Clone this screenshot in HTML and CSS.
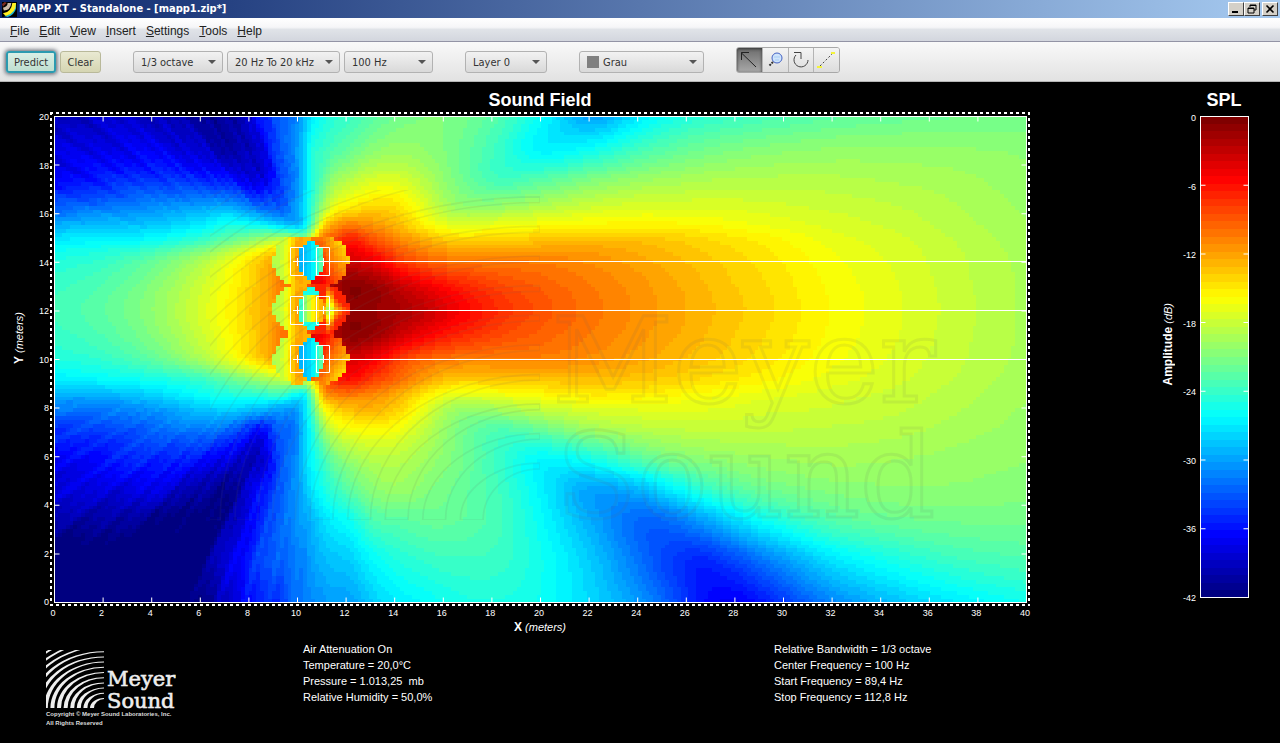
FILE: index.html
```html
<!DOCTYPE html>
<html lang="en">
<head>
  <meta charset="UTF-8" />
  <meta name="viewport" content="width=device-width, initial-scale=1.0" />
  <title>MAPP XT - Standalone - [mapp1.zip*]</title>
  <link rel="stylesheet" href="styles.css">
</head>
<body>
  <header class="titlebar">
    <svg class="app-icon" viewBox="0 0 16 16" aria-hidden="true">
      <rect width="16" height="16" fill="#000" />
      <path d="M2 15 Q13 13 14 1 L15 2 V7 Q13 14 6 16 Z" fill="#19b8d8" />
      <path d="M1 12 Q10 11 11 1 H15 Q15 12 4 15 Z" fill="#ffef20" />
      <path d="M1 6 Q6 5 6 1 L10 1 Q9 9 2 9 Z" fill="#c9b8a8" />
      <path d="M0 2 L3 0 L5 1 L1 5 Z" fill="#7b2a22" />
    </svg>
    <h1 class="title">MAPP XT - Standalone - [mapp1.zip*]</h1>
    <div class="window-buttons">
      <button class="window-button" aria-label="Minimize">
        <svg viewBox="0 0 12 10"><path d="M2 8h6" stroke="#000" stroke-width="2" /></svg>
      </button>
      <button class="window-button" aria-label="Restore">
        <svg viewBox="0 0 12 10"><path d="M4 3V1h6v5H8M4 1.5h6M2 4h6v5H2zM2 4.5h6" fill="none" stroke="#000" /></svg>
      </button>
      <button class="window-button close" aria-label="Close">
        <svg viewBox="0 0 12 10"><path d="M2.5 1.5l7 7M9.5 1.5l-7 7" stroke="#000" stroke-width="1.6" /></svg>
      </button>
    </div>
  </header>

  <nav class="menubar">
    <a href="#"><u>F</u>ile</a>
    <a href="#"><u>E</u>dit</a>
    <a href="#"><u>V</u>iew</a>
    <a href="#"><u>I</u>nsert</a>
    <a href="#"><u>S</u>ettings</a>
    <a href="#"><u>T</u>ools</a>
    <a href="#"><u>H</u>elp</a>
  </nav>

  <div class="toolbar">
    <button class="btn btn-predict">Predict</button>
    <button class="btn btn-clear">Clear</button>
    <div class="combo combo-bandwidth">
      <select aria-label="Bandwidth"><option>1/3 octave</option></select>
    </div>
    <div class="combo combo-range">
      <select aria-label="Frequency range"><option>20 Hz To 20 kHz</option></select>
    </div>
    <div class="combo combo-frequency">
      <select aria-label="Center frequency"><option>100 Hz</option></select>
    </div>
    <div class="combo combo-layer">
      <select aria-label="Layer"><option>Layer 0</option></select>
    </div>
    <div class="combo combo-color">
      <select aria-label="Color"><option>Grau</option></select>
    </div>
    <div class="tools">
      <button class="tool active" aria-label="Select">
        <svg viewBox="0 0 24 24"><path d="M19 19L4 4.500M4.500 12V4.500H12" fill="none" stroke="#222" /></svg>
      </button>
      <button class="tool" aria-label="Zoom">
        <svg viewBox="0 0 24 24">
          <path d="M10 14l-4 4" stroke="#333" stroke-width="2" stroke-dasharray="2 1" />
          <circle cx="14" cy="10" r="5" fill="#cfe4fb" stroke="#4563c4" />
          <path d="M11 9h6M12 12h4" stroke="#a6cdf5" />
        </svg>
      </button>
      <button class="tool" aria-label="Rotate">
        <svg viewBox="0 0 24 24"><path d="M19 12a7 7 0 1 1-12-5M5 4.500h7V11" fill="none" stroke="#444" /></svg>
      </button>
      <button class="tool" aria-label="Line">
        <svg viewBox="0 0 24 24">
          <path d="M6 18L18 6" stroke="#444" stroke-dasharray="2 2" />
          <path d="M3 19h5M17 5h4" stroke="#f4f43a" stroke-width="2" />
        </svg>
      </button>
    </div>
  </div>

  <main class="stage">
    <h2 class="plot-title">Sound Field</h2>
    <h2 class="scale-title">SPL</h2>

    <div class="y-axis">
      <p class="axis-title vertical"><b>Y</b> <i>(meters)</i></p>
      <ol class="y-labels">
        <li>20</li><li>18</li><li>16</li><li>14</li><li>12</li><li>10</li>
        <li>8</li><li>6</li><li>4</li><li>2</li><li>0</li>
      </ol>
    </div>

    <div class="plot">
      <div class="field">
        <canvas id="field" class="field-canvas" width="250" height="125"></canvas>
        <svg class="overlay" viewBox="0 0 973 487" preserveAspectRatio="none">
          <!-- watermark -->
          <g class="watermark">
            <svg x="156" y="74" width="330" height="330" viewBox="0 0 58 58">
              <path class="rings" d="" />
            </svg>
            <text x="498" y="286">Meyer</text>
            <text x="502" y="401">Sound</text>
          </g>
          <!-- frame and ticks -->
          <rect class="line" x="0.5" y="0.5" width="972" height="486" />
          <g class="ticks">
            <path d="M0 0H973" stroke-dasharray="1 47.6" />
            <path d="M0 487H973" stroke-dasharray="1 47.6" />
            <path d="M0 0V487" stroke-dasharray="1 47.6" />
            <path d="M973 0V487" stroke-dasharray="1 47.6" />
          </g>
          <!-- loudspeakers -->
          <g class="line">
            <path d="M239 145.500H973M239 194.500H973M239 243.500H973" />
            <path d="M236.500 131.500h13v28h-13zM262.500 131.500h13v28h-13zM243.500 142v8M269.500 142v8" />
            <path d="M236.500 180.500h13v28h-13zM262.500 180.500h13v28h-13zM243.500 190v8M269.500 190v8" />
            <path d="M236.500 229.500h13v27h-13zM262.500 229.500h13v27h-13zM243.500 239v8M269.500 239v8" />
          </g>
        </svg>
      </div>
    </div>

    <div class="scale">
      <p class="axis-title vertical"><b>Amplitude</b> <i>(dB)</i></p>
      <ol class="scale-labels">
        <li>0</li><li>-6</li><li>-12</li><li>-18</li><li>-24</li><li>-30</li><li>-36</li><li>-42</li>
      </ol>
      <div class="scale-bar">
        <canvas id="scale" class="field-canvas" width="1" height="64"></canvas>
        <svg class="overlay" viewBox="0 0 49 482" preserveAspectRatio="none">
          <rect class="line" x="0.5" y="0.5" width="48" height="481" />
          <g class="ticks">
            <path d="M0 0V482" stroke-dasharray="1 67.700" />
            <path d="M49 0V482" stroke-dasharray="1 67.700" />
          </g>
        </svg>
      </div>
    </div>

    <div class="x-axis">
      <ol class="x-labels">
        <li>0</li><li>2</li><li>4</li><li>6</li><li>8</li><li>10</li><li>12</li>
        <li>14</li><li>16</li><li>18</li><li>20</li><li>22</li><li>24</li><li>26</li>
        <li>28</li><li>30</li><li>32</li><li>34</li><li>36</li><li>38</li><li>40</li>
      </ol>
      <p class="axis-title"><b>X</b> <i>(meters)</i></p>
    </div>
  </main>

  <footer class="info">
    <div class="brand">
      <svg class="logo" viewBox="0 0 130 59" role="img" aria-label="Meyer Sound">
        <svg width="58" height="58" viewBox="0 0 58 58"><path class="rings" d="" /></svg>
        <text x="61" y="36">Meyer</text>
        <text x="61" y="58">Sound</text>
      </svg>
      <p class="copyright">Copyright © Meyer Sound Laboratories, Inc.<br>All Rights Reserved</p>
    </div>
    <div class="info-list">
      <p>Air Attenuation On</p>
      <p>Temperature = 20,0°C</p>
      <p>Pressure = 1.013,25 &nbsp;mb</p>
      <p>Relative Humidity = 50,0%</p>
    </div>
    <div class="info-list">
      <p>Relative Bandwidth = 1/3 octave</p>
      <p>Center Frequency = 100 Hz</p>
      <p>Start Frequency = 89,4 Hz</p>
      <p>Stop Frequency = 112,8 Hz</p>
    </div>
  </footer>

  <script src="script.js"></script>
</body>
</html>
```
FILE: styles.css
```css
* {
  box-sizing: border-box;
}

body {
  margin: 0;
  background-color: #000;
  color: #fff;
  font-family: "Liberation Sans", Arial, sans-serif;
}

h1, h2, p, ol {
  margin: 0;
  padding: 0;
}

ol {
  list-style: none;
}

button, select {
  font-family: inherit;
  margin: 0;
}

/* Title bar */
.titlebar {
  display: flex;
  align-items: center;
  height: 18px;
  padding: 0 2px;
  background: linear-gradient(to right, #0a246a, #a6caf0);
}

.app-icon {
  width: 15px;
  height: 15px;
}

.title {
  flex: 1;
  margin-left: 2px;
  font-family: "DejaVu Sans Condensed", "DejaVu Sans", Tahoma, sans-serif;
  font-stretch: condensed;
  font-size: 11px;
  line-height: 16px;
  font-weight: bold;
}

.window-buttons {
  display: flex;
}

.window-button {
  display: flex;
  width: 16px;
  height: 14px;
  padding: 1px;
  border: 1px solid;
  border-color: #fff #404040 #404040 #fff;
  background-color: #d4d0c8;
}

.window-button.close {
  margin-left: 2px;
}

.window-button svg {
  width: 12px;
  height: 10px;
}

/* Menu */
.menubar {
  display: flex;
  gap: 10px;
  height: 24px;
  padding: 0 10px;
  border-bottom: 1px solid #9394a5;
  background: linear-gradient(#fff, #f6f6f8 40%, #e0e3e8 50%, #d3d6de);
}

.menubar a {
  color: #222;
  font-size: 12px;
  line-height: 26px;
  text-decoration: none;
}

/* Toolbar */
.toolbar {
  display: flex;
  align-items: flex-end;
  height: 40px;
  padding: 5px 6px 8px;
  border-bottom: 1px solid #b5b5b5;
  background: linear-gradient(#f9f9f9, #e2e2e2);
  font-family: "DejaVu Sans Condensed", "DejaVu Sans", Tahoma, sans-serif;
  font-stretch: condensed;
}

.btn {
  height: 22px;
  padding: 0;
  border: 1px solid #b9b99a;
  border-radius: 3px;
  color: #333;
  font-size: 11px;
}

.btn-predict {
  width: 50px;
  border: 2px solid #2b9ab0;
  background: linear-gradient(#d9efe6, #bfdfd0);
  box-shadow: 0 0 4px 1px #555a66;
}

.btn-clear {
  width: 41px;
  margin-left: 4px;
  background: linear-gradient(#e9e9d2, #d5d5b2);
}

.combo {
  position: relative;
  height: 22px;
}

.combo select {
  display: block;
  width: 100%;
  height: 100%;
  padding: 0 7px;
  appearance: none;
  border: 1px solid #b2b2b2;
  border-radius: 3px;
  background: linear-gradient(#f2f2f2, #d9d9d9);
  color: #333;
  font-size: 11px;
}

.combo::after {
  content: "";
  position: absolute;
  top: 9px;
  right: 7px;
  border: 4px solid transparent;
  border-top-color: #555;
  border-bottom: 0;
  pointer-events: none;
}

.combo-bandwidth {
  width: 90px;
  margin-left: 32px;
}

.combo-range {
  width: 113px;
  margin-left: 4px;
}

.combo-frequency {
  width: 89px;
  margin-left: 4px;
}

.combo-layer {
  width: 82px;
  margin-left: 32px;
}

.combo-color {
  width: 125px;
  margin-left: 32px;
}

.combo-color select {
  padding-left: 23px;
}

.combo-color::before {
  content: "";
  position: absolute;
  top: 5px;
  left: 8px;
  width: 12px;
  height: 12px;
  background-color: #808080;
}

.tools {
  display: flex;
  width: 104px;
  margin-left: 32px;
  border: 1px solid #a8a8a8;
  border-radius: 3px;
  overflow: hidden;
}

.tool {
  flex: 1;
  height: 24px;
  padding: 0;
  border: 0;
  border-right: 1px solid #b4b4b4;
  background: linear-gradient(#f4f4f4, #dcdcdc);
}

.tool:last-child {
  border-right: 0;
}

.tool.active {
  background: linear-gradient(#6c6c6c, #a8a8a8);
  box-shadow: inset 0 1px 3px #333;
}

.tool svg {
  display: block;
  width: 24px;
  height: 24px;
}

/* Plot and colour scale */
.stage {
  display: grid;
  grid-template-columns: 50px minmax(0, 1fr) 250px;
  grid-template-rows: 30px auto auto;
}

.plot-title,
.scale-title {
  font-size: 18px;
  line-height: 36px;
  text-align: center;
}

.plot-title {
  grid-column: 2;
}

.scale-title {
  padding-left: 138px;
}

.y-axis {
  display: flex;
  align-items: center;
  justify-content: space-between;
}

.axis-title {
  font-size: 11px;
  line-height: 14px;
  white-space: nowrap;
}

.axis-title b {
  font-size: 12px;
}

.vertical {
  writing-mode: vertical-rl;
  transform: rotate(180deg);
}

.y-axis .vertical {
  margin: 0 0 42px 12px;
}

.y-labels,
.scale-labels {
  display: flex;
  flex-direction: column;
  justify-content: space-between;
  align-self: stretch;
  padding: 5px 1px 4px 0;
  font-size: 9px;
  line-height: 0;
  text-align: right;
}

.plot {
  padding: 4px 3px 3px 4px;
  background:
    repeating-linear-gradient(to right, #fff 0 3px, #000 3px 6px) top / 100% 2px no-repeat,
    repeating-linear-gradient(to right, #fff 0 3px, #000 3px 6px) bottom / 100% 2px no-repeat,
    repeating-linear-gradient(#fff 0 3px, #000 3px 6px) left / 2px 100% no-repeat,
    repeating-linear-gradient(#fff 0 3px, #000 3px 6px) right / 2px 100% no-repeat;
}

.field {
  position: relative;
  aspect-ratio: 973 / 487;
}

.field-canvas {
  display: block;
  width: 100%;
  height: 100%;
  image-rendering: pixelated;
}

.overlay {
  position: absolute;
  top: 0;
  left: 0;
  width: 100%;
  height: 100%;
}

.line {
  fill: none;
  stroke: #fff;
}

.ticks {
  fill: none;
  stroke: #fff;
  stroke-width: 11px;
}

.watermark {
  fill: none;
  stroke: rgba(100, 100, 100, 0.1);
  stroke-width: 2px;
}

.watermark path {
  stroke-width: 0.3px;
}

.watermark text {
  font-family: "DejaVu Serif", serif;
  font-size: 118px;
  stroke-width: 3px;
}

.scale {
  display: flex;
  align-items: center;
  justify-content: flex-end;
  padding: 4px 31px 8px 0;
}

.scale .vertical {
  margin: 0 4px 26px 0;
}

.scale-labels {
  width: 18px;
  margin-right: 3px;
  padding: 2px 1px 0 0;
}

.scale-bar {
  position: relative;
  width: 49px;
  height: 482px;
  align-self: stretch;
}

.x-axis {
  grid-column: 2;
  text-align: center;
}

.x-labels {
  display: flex;
  justify-content: space-between;
  padding: 0 5px 0 3px;
  font-size: 9px;
  line-height: 14px;
}

.x-labels li {
  display: flex;
  justify-content: center;
  width: 0;
}

/* Footer */
.info {
  display: grid;
  grid-template-columns: 257fr 471fr 506fr;
  padding: 7px 0 10px 46px;
}

.brand {
  padding-top: 9px;
  color: #ddd;
}

.logo {
  display: block;
  width: 130px;
  height: 59px;
  fill: #eee;
}

.logo text {
  font-family: "DejaVu Serif", serif;
  font-size: 21px;
  stroke: #eee;
  stroke-width: 0.6px;
}

.copyright {
  margin-top: 1px;
  font-size: 6px;
  line-height: 9px;
  font-weight: bold;
}

.info-list {
  font-size: 11px;
  line-height: 16px;
}
```
FILE: script.js
```js
// Level samples in dB below maximum. Columns and rows are placed unevenly,
// denser around the loudspeakers.
const cols = [54, 100, 150, 200, 230, 260, 280, 296, 304, 312, 322, 335, 350, 375, 400, 430, 460, 500, 540, 590, 640, 670, 700, 730, 760, 830, 900, 960, 1026];
const rows = [117, 150, 180, 210, 225, 240, 260, 285, 310, 335, 360, 380, 395, 410, 430, 460, 490, 520, 560, 602];
const levels = [
  [39.5, 38.5, 39, 40.5, 40.5, 36, 32.5, 31.5, 29, 27, 25.5, 24.5, 24, 22.5, 21.5, 21, 21.3, 23, 26, 30, 27, 25.5, 24.5, 24, 23.5, 22.5, 22, 21.7, 21.5],
  [38, 37.5, 37, 38.5, 40, 38, 33, 30.5, 28, 25, 24, 23, 22, 20.5, 20, 20.5, 21.7, 24, 26.5, 25.8, 23.5, 22.5, 21.7, 21.2, 20.8, 20.3, 20.2, 20.3, 20.5],
  [36.5, 35.5, 34.5, 35, 36, 38, 34, 31, 28, 25, 22.5, 20, 18.8, 17.5, 17.5, 19.3, 21.5, 23.5, 22.8, 21.2, 20, 19.6, 19.2, 19, 18.9, 18.9, 19.2, 19.5, 20.2],
  [32.5, 31.5, 30.5, 29.5, 29, 31.5, 32.5, 30, 27.5, 23.5, 19.5, 16, 14.7, 13.8, 14.5, 17.5, 19.8, 19.5, 18.5, 17.5, 17, 17, 17, 17.1, 17.3, 17.8, 18.3, 19, 19.8],
  [29.5, 29, 28.5, 27, 25.5, 26.5, 28, 29, 27, 22, 15.5, 12, 10.8, 11.8, 13.3, 16, 17.3, 16.7, 16.2, 15.7, 15.5, 15.6, 15.8, 16.1, 16.5, 17.3, 18, 18.8, 19.6],
  [27, 26.5, 26, 24, 22, 20, 18.5, 19, 20, 16, 10, 8.5, 6.5, 9, 11, 13, 14.2, 14, 13.6, 13.2, 13.4, 13.8, 14.3, 14.8, 15.3, 16.7, 17.6, 18.5, 19.5],
  [25, 24.3, 22.5, 19.5, 17, 14, 12, 12, 12, 10, 7, 5, 4, 5.3, 8, 9.8, 10.6, 10.8, 10.8, 11.4, 12.3, 12.9, 13.5, 14.1, 14.7, 16.2, 17.3, 18.3, 19.3],
  [24, 23, 21, 18, 15.8, 13.3, 10.5, 10, 10, 8, 5, 2, 0.8, 1.5, 3.5, 5.4, 6.9, 8.4, 9.4, 10.5, 11.6, 12.3, 13, 13.7, 14.3, 15.9, 17.1, 18.2, 19.2],
  [23.5, 22.5, 20.5, 17.5, 15.5, 13, 12, 11, 10, 8, 6, 3, 1, 1.3, 2, 3.5, 5.3, 7.4, 8.8, 10.2, 11.4, 12.1, 12.8, 13.5, 14.1, 15.8, 17, 18.1, 19.2],
  [24, 23, 21, 18, 15.8, 13.3, 10.5, 10, 10, 8, 5, 2, 0.8, 1.5, 3.5, 5.4, 6.9, 8.4, 9.4, 10.5, 11.6, 12.3, 13, 13.7, 14.3, 15.9, 17.1, 18.2, 19.2],
  [25, 24.3, 22.5, 19.5, 17, 14, 12, 12, 12, 10, 7, 5, 4, 5.3, 8, 9.8, 10.6, 10.8, 10.8, 11.4, 12.3, 12.9, 13.5, 14.1, 14.7, 16.2, 17.3, 18.3, 19.3],
  [27, 26.3, 25.5, 24, 22, 20, 18.5, 18, 18, 15, 10, 7, 6, 8, 10, 12.5, 13.8, 13.6, 13.4, 13.3, 13.6, 14, 14.5, 15, 15.5, 16.7, 17.6, 18.5, 19.5],
  [29.5, 29.2, 28, 26, 25, 24.5, 24, 26, 26, 21, 13, 10.8, 10.3, 11.2, 12.7, 15.5, 17, 16.5, 15.8, 15.1, 15.3, 15.6, 16, 16.3, 16.7, 17.4, 18, 18.8, 19.6],
  [31.5, 31.5, 30.5, 28.5, 28, 29, 30, 30, 27.5, 23, 17, 14.3, 13.2, 12.9, 14.2, 17.5, 20, 19.5, 18.3, 17.3, 17, 17, 17, 17.2, 17.5, 17.8, 18.3, 19, 19.8],
  [34.5, 34, 32.5, 31.5, 32.5, 36, 32.5, 31.5, 28, 25, 20.5, 17.5, 16.3, 15.8, 16.5, 18.8, 21.3, 23, 22, 19.8, 18.8, 18.5, 18.3, 18.3, 18.3, 18.5, 18.8, 19.4, 20],
  [37, 36, 35, 36, 38, 39, 33, 31, 28, 26, 24, 21.5, 20, 18.8, 18.8, 20, 21.5, 24, 26.3, 25.5, 22.8, 21.5, 20.7, 20.2, 19.9, 19.5, 19.7, 20, 20.3],
  [38, 38, 37.5, 40, 41, 36, 33, 30.5, 29, 27, 25.5, 24, 22.5, 20.5, 20, 21, 22, 23.7, 26.5, 29.8, 29, 26.8, 24.6, 23, 21.9, 20.8, 20.5, 20.5, 20.8],
  [40, 40, 41, 42, 40, 35, 32.5, 30.5, 30, 29, 27.5, 26.5, 25.5, 23, 22.5, 22, 22.3, 23.5, 26, 29.5, 32.3, 31.8, 30, 27.8, 25.8, 22.8, 21.8, 21.5, 21.5],
  [42, 43, 43, 41.5, 37.5, 34, 32.5, 31.5, 31, 30, 29, 28.5, 28, 26, 24.8, 24, 23.7, 24, 25.5, 28.3, 32, 34, 35, 33.8, 31.8, 27.3, 25, 23.7, 23],
  [42, 43, 43, 41.5, 38, 35.5, 34, 32, 31.5, 31, 30.5, 30, 30, 28, 26.8, 26, 25.2, 25, 25.7, 27.7, 30.5, 33, 35.8, 37, 35.8, 31.2, 28.5, 26.8, 25.5]
];

// Cubic interpolation over unevenly spaced samples
function interpolate(xs, ys, x) {
  const n = xs.length;
  let i = 0;
  while (i < n - 2 && x > xs[i + 1]) i++;
  const slope = k => {
    const a = Math.max(0, k - 1);
    const b = Math.min(n - 1, k + 1);
    return (ys[b] - ys[a]) / (xs[b] - xs[a]);
  };
  const h = xs[i + 1] - xs[i];
  const t = Math.min(1, Math.max(0, (x - xs[i]) / h));
  const t2 = t * t;
  const t3 = t2 * t;
  return (2 * t3 - 3 * t2 + 1) * ys[i] + (t3 - 2 * t2 + t) * h * slope(i)
    + (3 * t2 - 2 * t3) * ys[i + 1] + (t3 - t2) * h * slope(i + 1);
}

// 64 step rainbow palette, 0 dB is dark red and 42 dB below is dark blue
function color(level) {
  const step = Math.min(63, Math.max(0, Math.floor((1 - level / 42) * 64)));
  const v = step / 63;
  const channel = c => Math.round(255 * Math.min(1, Math.max(0, 1.5 - Math.abs(4 * v - c))));
  return [channel(3), channel(2), channel(1)];
}

// Level inside the near field discs of the three speaker pairs
function nearField(x, y) {
  for (const cy of [261, 310, 359]) {
    const inLeft = Math.hypot(x - 298, y - cy) < 25;
    const inRight = Math.hypot(x - 323, y - cy) < 25;
    const middle = cy === 310;
    const dy = Math.abs(y - cy);
    if (inLeft && inRight) {
      if (!middle) return interpolate([300, 308, 316, 323], [29.5, 28, 25, 21], x);
      return dy > 13 ? 25 : interpolate([300, 306, 312, 322], [25, 20, 16, 12], x);
    }
    if (inLeft) {
      return interpolate([273, 282, 290, 298, 304], [19, 17.5, 14.5, 11.5, 12], x) + dy * 0.04;
    }
    if (inRight && middle) {
      return Math.max(7, interpolate([316, 323, 329, 336, 347], [8, 12, 20, 13, 8], x) - dy * 0.5);
    }
    if (inRight) {
      const away = (y - cy) * (cy < 310 ? -1 : 1);
      return interpolate([306, 323, 335, 347], [7, 8, 11, 13], x) + away * 0.12;
    }
  }
  return null;
}

function drawField() {
  const canvas = document.getElementById('field');
  const ctx = canvas.getContext('2d');
  const image = ctx.createImageData(canvas.width, canvas.height);
  for (let j = 0; j < canvas.height; j++) {
    const y = 117 + (j + 0.5) * 486 / canvas.height;
    for (let i = 0; i < canvas.width; i++) {
      const x = 54 + (i + 0.5) * 972 / canvas.width;
      let level = nearField(x, y);
      if (level === null) {
        level = interpolate(rows, levels.map(row => interpolate(cols, row, x)), y);
        // ray streaks behind the speakers
        if (x < 345 && level > 27) {
          const a = Math.atan2(y - 310, x - 330);
          const amount = Math.min(1, (level - 27) / 9) * Math.min(1, (345 - x) / 60);
          level += amount * (Math.sin(a * 37) * 0.3 + Math.sin(a * 83 + 1) * 0.45 + Math.sin(a * 157 + 2) * 0.45);
        }
      }
      image.data.set([...color(level), 255], (j * canvas.width + i) * 4);
    }
  }
  ctx.putImageData(image, 0, 0);
}

function drawScale() {
  const canvas = document.getElementById('scale');
  const ctx = canvas.getContext('2d');
  for (let j = 0; j < 64; j++) {
    ctx.fillStyle = `rgb(${color((j + 0.5) * 42 / 64).join(',')})`;
    ctx.fillRect(0, j, 1, 1);
  }
}

// Tapered quarter rings of the logo, wide at the bottom and thin on the right
function drawRings() {
  let d = '';
  for (let k = 0; k < 15; k++) {
    const rx = 14 + k * 6.6;
    const ry = 10 + k * 5.2;
    d += `M${58 - rx} 58A${rx} ${ry} 0 0 1 58 ${58 - ry}v1A${rx - 4} ${ry - 1} 0 0 0 ${62 - rx} 58Z`;
  }
  document.querySelectorAll('.rings').forEach(path => path.setAttribute('d', d));
}

drawField();
drawScale();
drawRings();
```
